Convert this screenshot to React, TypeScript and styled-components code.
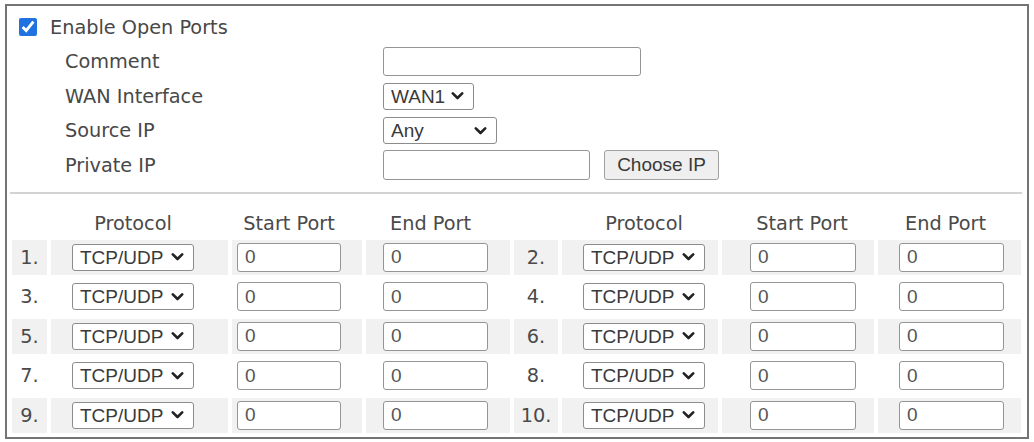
import React from 'react';
import styled, { createGlobalStyle } from 'styled-components';

const Global = createGlobalStyle`
  html, body { margin: 0; padding: 0; background: #fff; }
  body { font-family: "DejaVu Sans", Verdana, sans-serif; }
`;

const Panel = styled.div`
  box-sizing: border-box;
  margin: 4px 0 0 5px;
  width: 1024px;
  height: 435px;
  border: 2px solid #747474;
  display: flex;
  flex-direction: column;
  font-family: "DejaVu Sans", Verdana, sans-serif;
  font-size: 19.3px;
  color: #484848;
`;

const TopSection = styled.div`
  padding-top: 4px;
  display: flex;
  flex-direction: column;
`;

const EnableRow = styled.label`
  height: 34.5px;
  display: flex;
  align-items: center;
  padding-left: 12px;
  gap: 13px;
`;

const Check = styled.input`
  width: 18px;
  height: 18px;
  margin: 0;
  accent-color: #1f72e0;
`;

const FieldRow = styled.div`
  height: 34.5px;
  display: grid;
  grid-template-columns: 318px auto;
  align-items: center;
  padding-left: 58px;
`;

const FieldLabel = styled.span`
  white-space: nowrap;
`;

const Controls = styled.div`
  display: flex;
  align-items: center;
  gap: 14px;
`;

const TextInput = styled.input<{ $w: number; $h?: number }>`
  box-sizing: border-box;
  width: ${(p) => p.$w}px;
  height: ${(p) => p.$h ?? 29}px;
  border: 1px solid #959595;
  border-radius: 3px;
  padding: 0 7px;
  margin: 0;
  font-family: "Liberation Sans", Arial, sans-serif;
  font-size: 19px;
  color: #555;
  background: #fff;
  outline: none;
`;

const SelectBox = styled.span<{ $w: number }>`
  position: relative;
  display: inline-block;
  width: ${(p) => p.$w}px;
  height: 27px;
`;

const NativeSelect = styled.select`
  appearance: none;
  box-sizing: border-box;
  width: 100%;
  height: 100%;
  border: 1px solid #8c8c8c;
  border-radius: 3px;
  padding: 0 0 0 7px;
  margin: 0;
  font-family: "Liberation Sans", Arial, sans-serif;
  font-size: 19px;
  color: #3a3a3a;
  background: #fff;
  outline: none;
`;

const Chevron = styled.svg`
  position: absolute;
  right: 10px;
  top: 50%;
  transform: translateY(-50%);
  width: 13px;
  height: 9px;
  pointer-events: none;
`;

const ActionButton = styled.button`
  box-sizing: border-box;
  width: 115px;
  height: 30px;
  border: 1px solid #a0a0a0;
  border-radius: 3px;
  background: #efefef;
  padding: 0;
  margin: 0;
  font-family: "Liberation Sans", Arial, sans-serif;
  font-size: 19px;
  color: #3a3a3a;
`;

const Divider = styled.div`
  height: 2px;
  background: #d2d2d2;
  margin: 9.5px 5px 0 3px;
`;

const PortGrid = styled.div`
  display: grid;
  grid-template-columns: 35px 177px 130px 144px 44px 156px 152px 143px;
  grid-template-rows: 22.6px;
  grid-auto-rows: 35px;
  column-gap: 4px;
  row-gap: 4.4px;
  padding: 19px 6px 0 5px;
`;

const HeaderCell = styled.div<{ $off: number; $w: number }>`
  box-sizing: border-box;
  width: ${(p) => p.$off + p.$w}px;
  padding-left: ${(p) => p.$off}px;
  line-height: 22.6px;
  text-align: center;
  white-space: nowrap;
  color: #4a4a4a;
`;

const Cell = styled.div<{ $shade: boolean; $off?: number }>`
  display: flex;
  align-items: center;
  padding-left: ${(p) => p.$off ?? 0}px;
  background: ${(p) => (p.$shade ? '#f1f1f1' : '#ffffff')};
`;

const NumCell = styled(Cell)`
  justify-content: center;
  color: #4a4a4a;
`;

type Col = { off: number; w: number; shift: number };
const leftCols: Col[] = [
  { off: 21, w: 122, shift: 0 },
  { off: 5, w: 104, shift: 0 },
  { off: 17, w: 105, shift: -5 },
];
const rightCols: Col[] = [
  { off: 21, w: 122, shift: 0 },
  { off: 28, w: 106, shift: -1 },
  { off: 21, w: 105, shift: -6 },
];
const headerNames = ['Protocol', 'Start Port', 'End Port'];

const ChevronIcon = () => (
  <Chevron viewBox="0 0 13 9">
    <path d="M1.8 1.8 L6.5 6.5 L11.2 1.8" fill="none" stroke="#222" strokeWidth="2.6" strokeLinecap="round" strokeLinejoin="round" />
  </Chevron>
);

const Select = ({ w, value, options }: { w: number; value: string; options: string[] }) => (
  <SelectBox $w={w}>
    <NativeSelect defaultValue={value}>
      {options.map((o) => (
        <option key={o}>{o}</option>
      ))}
    </NativeSelect>
    <ChevronIcon />
  </SelectBox>
);

const protoOptions = ['TCP/UDP', 'TCP', 'UDP'];

const PortGroup = ({ n, cols, shade }: { n: number; cols: Col[]; shade: boolean }) => (
  <>
    <NumCell $shade={shade}>{n}.</NumCell>
    <Cell $shade={shade} $off={cols[0].off}>
      <Select w={cols[0].w} value="TCP/UDP" options={protoOptions} />
    </Cell>
    <Cell $shade={shade} $off={cols[1].off}>
      <TextInput $w={cols[1].w} defaultValue="0" />
    </Cell>
    <Cell $shade={shade} $off={cols[2].off}>
      <TextInput $w={cols[2].w} defaultValue="0" />
    </Cell>
  </>
);

export default function App() {
  const rows = [0, 1, 2, 3, 4];
  return (
    <>
      <Global />
      <Panel>
        <TopSection>
          <EnableRow>
            <Check type="checkbox" defaultChecked />
            <span>Enable Open Ports</span>
          </EnableRow>
          <FieldRow>
            <FieldLabel>Comment</FieldLabel>
            <Controls>
              <TextInput $w={258} />
            </Controls>
          </FieldRow>
          <FieldRow>
            <FieldLabel>WAN Interface</FieldLabel>
            <Controls>
              <Select w={91} value="WAN1" options={['WAN1', 'WAN2', 'WAN3']} />
            </Controls>
          </FieldRow>
          <FieldRow>
            <FieldLabel>Source IP</FieldLabel>
            <Controls>
              <Select w={114} value="Any" options={['Any']} />
            </Controls>
          </FieldRow>
          <FieldRow>
            <FieldLabel>Private IP</FieldLabel>
            <Controls>
              <TextInput $w={207} $h={30} />
              <ActionButton>Choose IP</ActionButton>
            </Controls>
          </FieldRow>
        </TopSection>
        <Divider />
        <PortGrid>
          <div />
          {leftCols.map((c, i) => (
            <HeaderCell key={'l' + i} $off={c.off + c.shift} $w={c.w}>
              {headerNames[i]}
            </HeaderCell>
          ))}
          <div />
          {rightCols.map((c, i) => (
            <HeaderCell key={'r' + i} $off={c.off + c.shift} $w={c.w}>
              {headerNames[i]}
            </HeaderCell>
          ))}
          {rows.map((r) => (
            <React.Fragment key={r}>
              <PortGroup n={r * 2 + 1} cols={leftCols} shade={r % 2 === 0} />
              <PortGroup n={r * 2 + 2} cols={rightCols} shade={r % 2 === 0} />
            </React.Fragment>
          ))}
        </PortGrid>
      </Panel>
    </>
  );
}
